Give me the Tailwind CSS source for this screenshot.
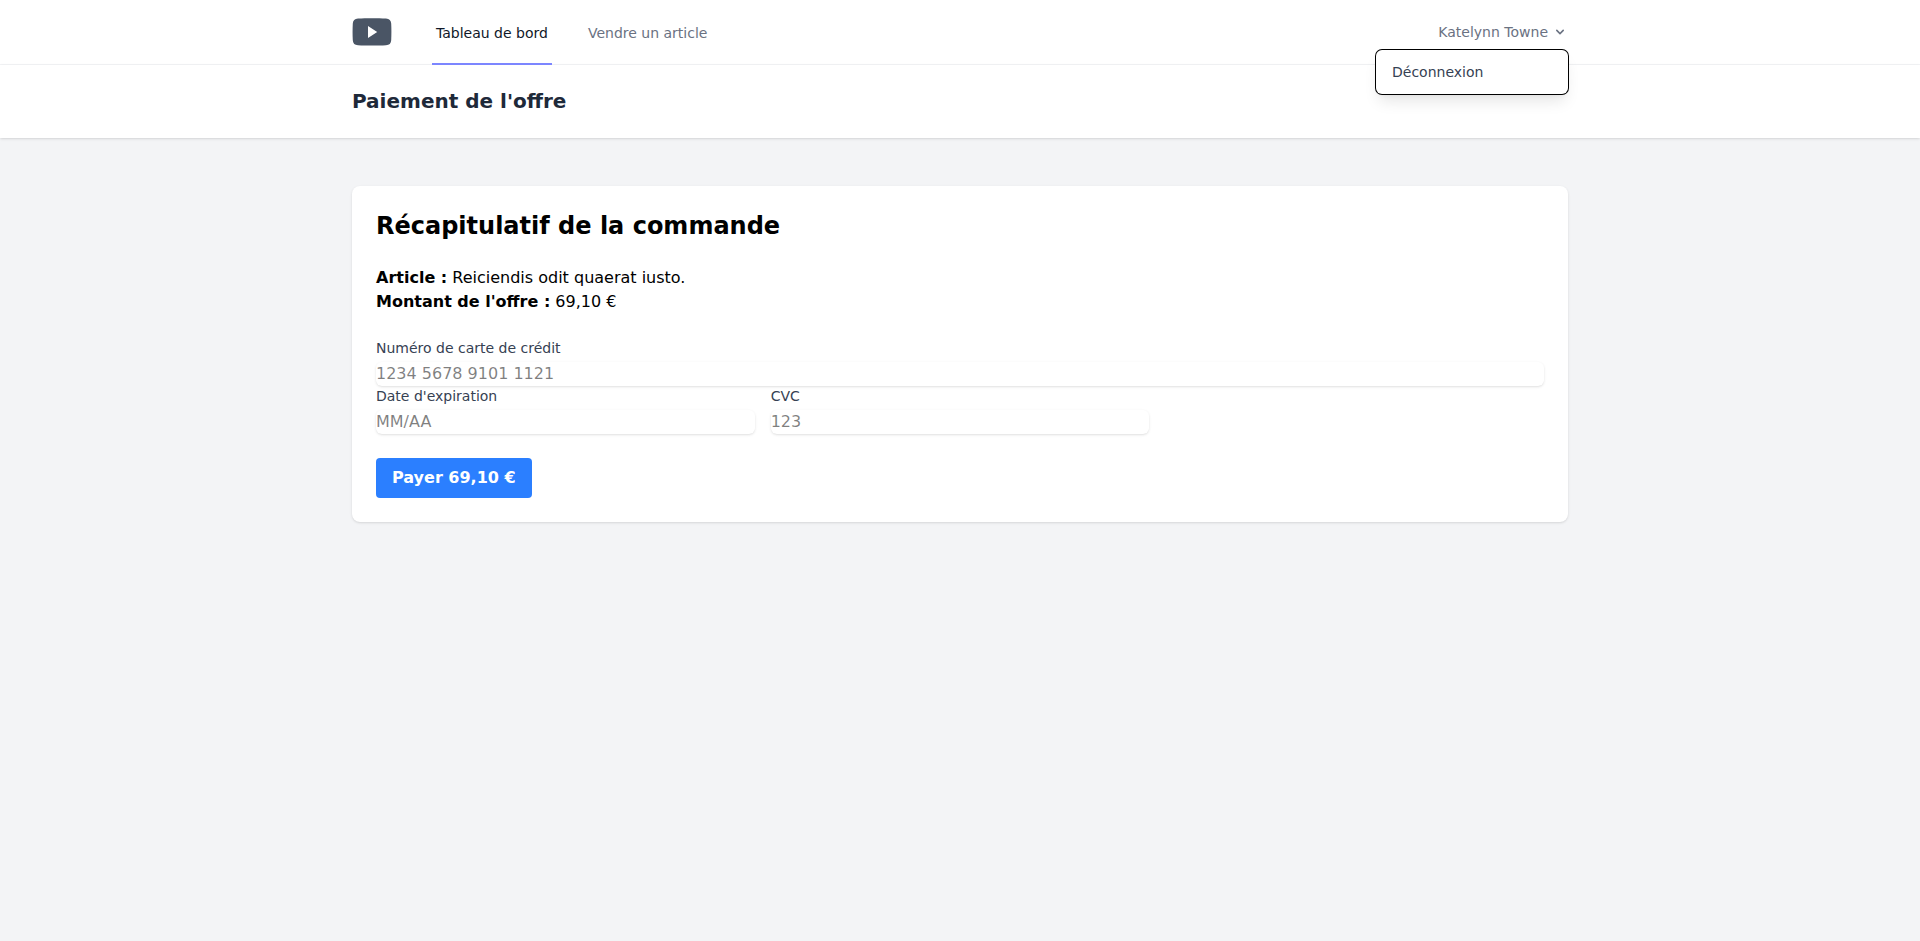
<!DOCTYPE html>
<html lang="fr">
<head>
<meta charset="utf-8">
<meta name="viewport" content="width=device-width, initial-scale=1">
<title>Paiement de l'offre</title>
<script src="https://cdn.jsdelivr.net/npm/@tailwindcss/browser@4"></script>
</head>
<body class="font-['DejaVu_Sans',sans-serif] antialiased">
<div class="min-h-screen bg-gray-100">
  <nav class="border-b border-gray-100 bg-white">
    <div class="mx-auto flex h-16 max-w-7xl justify-between px-8">
      <div class="flex">
        <a href="#" aria-label="Accueil" class="flex shrink-0 items-center">
          <svg class="h-7 w-10 text-gray-600" viewBox="0 0 40 28" fill="currentColor" aria-hidden="true">
            <path fill-rule="evenodd" d="M6 .6C14 .1 26 .1 34 .6C37.400 .8 39 2.400 39.200 5.600C39.500 11 39.500 17 39.200 22.200C39 25.400 37.400 27 34 27.200C26 27.600 14 27.600 6 27.200C2.600 27 1 25.400 .8 22.200C.5 17 .5 11 .8 5.600C1 2.400 2.600 .8 6 .6ZM16 8V20L25.200 14Z"/>
          </svg>
        </a>
        <div class="-my-px ms-10 flex gap-8">
          <a href="#" aria-current="page" class="inline-flex items-center border-b-2 border-indigo-400 px-1 pt-1 text-sm font-medium text-gray-900">Tableau de bord</a>
          <a href="#" class="inline-flex items-center border-b-2 border-transparent px-1 pt-1 text-sm font-medium text-gray-500">Vendre un article</a>
        </div>
      </div>
      <div class="flex items-center">
        <div class="relative">
          <button type="button" aria-expanded="true" class="flex items-center text-sm font-medium text-gray-500">
            Katelynn Towne
            <svg class="ms-1 h-4 w-4 fill-current" viewBox="0 0 20 20" aria-hidden="true">
              <path fill-rule="evenodd" d="M5.293 7.293a1 1 0 011.414 0L10 10.586l3.293-3.293a1 1 0 111.414 1.414l-4 4a1 1 0 01-1.414 0l-4-4a1 1 0 010-1.414z" clip-rule="evenodd"/>
            </svg>
          </button>
          <div class="absolute right-0 z-50 mt-2 w-48 rounded-md shadow-lg">
            <div class="rounded-md bg-white py-1 ring-1 ring-black">
              <a href="#" class="block px-4 py-2 text-sm text-gray-700">Déconnexion</a>
            </div>
          </div>
        </div>
      </div>
    </div>
  </nav>

  <header class="bg-white shadow">
    <div class="mx-auto max-w-7xl px-8 py-6">
      <h2 class="text-xl leading-tight font-semibold text-gray-800">Paiement de l'offre</h2>
    </div>
  </header>

  <main class="mx-auto max-w-7xl px-8 py-12">
    <div class="rounded-lg bg-white p-6 shadow">
      <h1 class="mb-6 text-2xl font-bold">Récapitulatif de la commande</h1>
      <div class="mb-6">
        <p><strong>Article :</strong> Reiciendis odit quaerat iusto.</p>
        <p><strong>Montant de l'offre :</strong> 69,10 €</p>
      </div>
      <form>
        <div class="grid grid-cols-3 gap-x-4">
          <div class="col-span-3">
            <label for="card" class="block text-sm font-medium text-gray-700">Numéro de carte de crédit</label>
            <input id="card" type="text" placeholder="1234 5678 9101 1121" class="mt-1 block w-full rounded-md shadow-sm">
          </div>
          <div>
            <label for="expiry" class="block text-sm font-medium text-gray-700">Date d'expiration</label>
            <input id="expiry" type="text" placeholder="MM/AA" class="mt-1 block w-full rounded-md shadow-sm">
          </div>
          <div>
            <label for="cvc" class="block text-sm font-medium text-gray-700">CVC</label>
            <input id="cvc" type="text" placeholder="123" class="mt-1 block w-full rounded-md shadow-sm">
          </div>
        </div>
        <button type="submit" class="mt-6 rounded bg-blue-500 px-4 py-2 font-bold text-white">Payer 69,10 €</button>
      </form>
    </div>
  </main>
</div>
</body>
</html>
